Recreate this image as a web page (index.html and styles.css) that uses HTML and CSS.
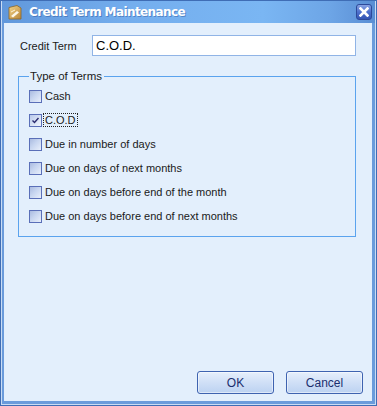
FILE: index.html
```html
<!DOCTYPE html>
<html>
<head>
<meta charset="utf-8">
<link rel="stylesheet" href="styles.css">
</head>
<body>
<div class="window">
  <div class="inner">
    <div class="titlebar">
      <svg class="app-icon" width="14" height="15" viewBox="0 0 14 15">
        <defs>
          <linearGradient id="ig" x1="0" y1="0" x2="1" y2="1">
            <stop offset="0" stop-color="#f4d58a"/>
            <stop offset="1" stop-color="#b8863a"/>
          </linearGradient>
        </defs>
        <path d="M1 2.5 L9 0.5 L13 3 L13 14 L1 14 Z" fill="url(#ig)" stroke="#8a6526" stroke-width="0.8"/>
        <path d="M3 11 L9 6 L11 7.5 L5 12.5 Z" fill="#fdf8ea"/>
        <path d="M3 7 L7 5" stroke="#fff4d6" stroke-width="1"/>
      </svg>
      <span class="title">Credit Term Maintenance</span>
      <div class="close-btn">
        <svg width="10" height="10" viewBox="0 0 10 10">
          <path d="M1.5 1.5 L8.5 8.5 M8.5 1.5 L1.5 8.5" stroke="#ffffff" stroke-width="2.6" stroke-linecap="square"/>
        </svg>
      </div>
    </div>
    <div class="content">
      <div class="field-row">
        <label class="field-label">Credit Term</label>
        <div class="text-input">C.O.D.</div>
      </div>
      <fieldset class="group">
        <legend class="legend">Type of Terms</legend>
        <div class="option"><span class="box"></span><span class="opt-label">Cash</span></div>
        <div class="option"><span class="box checked"><svg width="11" height="11" viewBox="0 0 11 11"><path d="M2.5 5.5 L4.5 7.5 L8.5 3" fill="none" stroke="#2a2a6e" stroke-width="1.4"/></svg></span><span class="opt-label focus">C.O.D</span></div>
        <div class="option"><span class="box"></span><span class="opt-label">Due in number of days</span></div>
        <div class="option"><span class="box"></span><span class="opt-label">Due on days of next months</span></div>
        <div class="option"><span class="box"></span><span class="opt-label">Due on days before end of the month</span></div>
        <div class="option"><span class="box"></span><span class="opt-label">Due on days before end of next months</span></div>
      </fieldset>
      <div class="spacer"></div>
      <div class="buttons">
        <div class="btn">OK</div>
        <div class="btn">Cancel</div>
      </div>
    </div>
  </div>
</div>
</body>
</html>
```

FILE: styles.css
```css
html, body {
  margin: 0;
  padding: 0;
  background: #ffffff;
}
body {
  font-family: "Liberation Sans", Arial, sans-serif;
  font-size: 11px;
  color: #1a1a1a;
}
.window {
  width: 377px;
  height: 406px;
  box-sizing: border-box;
  border: 1px solid #3f6db5;
  display: flex;
}
.inner {
  flex: 1;
  display: flex;
  flex-direction: column;
  border: 1px solid #c9ddf5;
  border-top: none;
}
.titlebar {
  height: 22px;
  display: flex;
  align-items: center;
  padding: 0 3px 0 6px;
  background: linear-gradient(to right, #6198dc 0%, #74aeee 35%, #7ab6f3 70%, #6da5e6 88%, #5a8ed4 100%);
}
.app-icon {
  flex: none;
  margin-right: 7px;
  margin-top: 1px;
}
.title {
  flex: 1;
  color: #ffffff;
  font-family: "DejaVu Sans", Verdana, sans-serif;
  font-weight: bold;
  font-size: 12px;
  letter-spacing: -0.6px;
  text-shadow: 1px 1px 0 rgba(40, 80, 150, 0.45);
}
.close-btn {
  width: 16px;
  height: 16px;
  box-sizing: border-box;
  border: 1px solid #2d4a9a;
  border-radius: 3px;
  background: linear-gradient(to bottom, #8aa4e4 0%, #4e70cc 50%, #3556b4 100%);
  display: flex;
  align-items: center;
  justify-content: center;
}
.content {
  flex: 1;
  display: flex;
  flex-direction: column;
  background: #e3effc;
  border: 2px solid #6a9bdb;
  border-top: none;
  border-right-width: 3px;
  border-bottom-width: 3px;
  padding: 12px 16px 7px 14px;
}
.field-row {
  display: flex;
  align-items: center;
  height: 21px;
}
.field-label {
  width: 72px;
  padding-left: 2px;
}
.text-input {
  flex: 1;
  height: 21px;
  box-sizing: border-box;
  border: 1px solid #90b4e6;
  background: #ffffff;
  padding: 2px 0 0 3px;
  font-size: 13px;
  color: #000000;
}
.group {
  margin: 14px 0 0 0;
  padding: 7px 0 0 10px;
  height: 167px;
  box-sizing: border-box;
  border: 1px solid #5aa3ee;
  display: flex;
  flex-direction: column;
  gap: 10px;
}
.legend {
  padding: 0 2px 0 1px;
  margin-left: 0;
  font-size: 11.5px;
  color: #1a1a1a;
}
.option {
  display: flex;
  align-items: center;
  height: 14px;
}
.box {
  width: 13px;
  height: 13px;
  box-sizing: border-box;
  border: 1px solid #5a6fb8;
  background: linear-gradient(135deg, #aabbe0 0%, #c8d6f0 45%, #e8effb 100%);
  margin-right: 1px;
  display: flex;
  align-items: center;
  justify-content: center;
}
.box.checked {
  background: linear-gradient(135deg, #b8c8ea 0%, #dbe5f6 60%, #f2f6fd 100%);
}
.opt-label {
  font-size: 11px;
  color: #1a1a1a;
  padding: 0 1px;
  border: 1px dotted transparent;
}
.opt-label.focus {
  border-color: #202020;
}
.spacer {
  flex: 1;
}
.buttons {
  display: flex;
  justify-content: flex-end;
  gap: 12px;
  margin-right: -7px;
}
.btn {
  width: 77px;
  height: 23px;
  box-sizing: border-box;
  border: 1px solid #3e63b0;
  border-radius: 3px;
  background: linear-gradient(to bottom, #e6effc 0%, #d2e1f7 45%, #bcd2f1 100%);
  box-shadow: inset 0 0 0 1px rgba(255,255,255,0.5);
  display: flex;
  align-items: center;
  justify-content: center;
  color: #1b2f6e;
  font-size: 12px;
}
```
